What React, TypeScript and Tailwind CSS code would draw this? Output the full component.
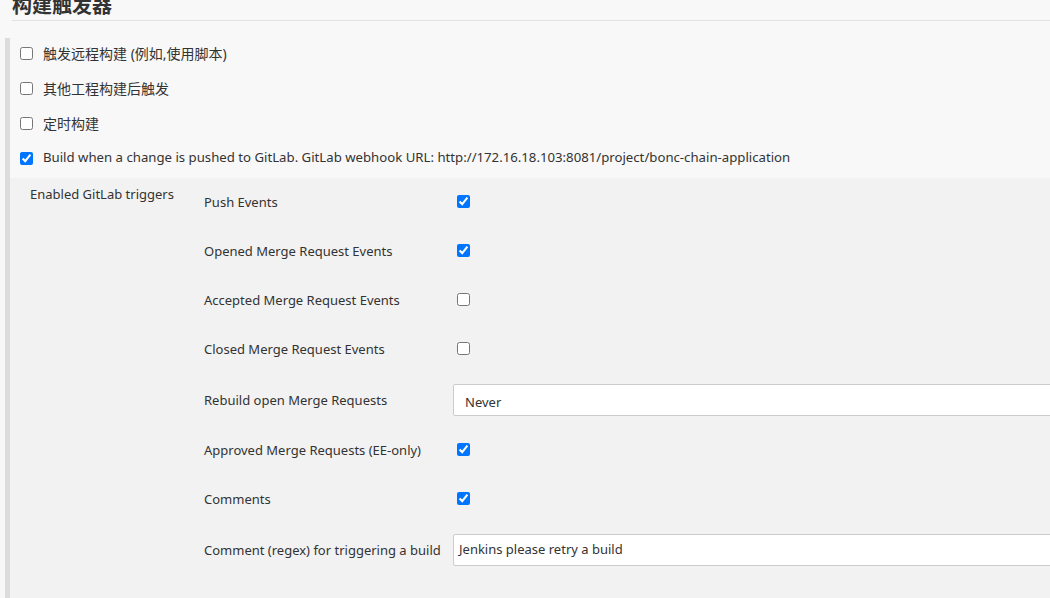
import { ReactNode } from "react";

const topOptions = [
  { label: "触发远程构建 (例如,使用脚本)", checked: false, cjk: true },
  { label: "其他工程构建后触发", checked: false, cjk: true },
  { label: "定时构建", checked: false, cjk: true },
  {
    label:
      "Build when a change is pushed to GitLab. GitLab webhook URL: http://172.16.18.103:8081/project/bonc-chain-application",
    checked: true,
    cjk: false,
  },
];

const Row = ({
  label,
  className,
  children,
}: {
  label: string;
  className: string;
  children: ReactNode;
}) => (
  <div className={`flex items-center ${className}`}>
    <div className="w-[249px] shrink-0 pt-[2px]">{label}</div>
    <div className="flex items-center flex-1">{children}</div>
  </div>
);

const Check = ({ checked }: { checked: boolean }) => (
  <input
    type="checkbox"
    defaultChecked={checked}
    className="ml-[4px] w-[13px] h-[13px] accent-[#0075ff]"
  />
);

const App = () => {
  return (
    <div
      className="w-[1050px] h-[598px] overflow-hidden bg-[#f8f8f8] text-[#333] text-[13px]"
      style={{ fontFamily: '"Noto Sans", "Noto Sans CJK SC", sans-serif' }}
    >
      <h2 className="ml-3 -mt-[8px] leading-[28px] text-[20px] font-bold border-b border-[#e2e2e2] text-[#333]">
        构建触发器
      </h2>

      <div className="ml-[5px] mt-[17px] border-l-[5px] border-[#dcdcdc] h-[600px]">
        <div className="flex flex-col gap-[21px] pt-[8px] pb-[13px] pl-[10px]">
          {topOptions.map((option) => (
            <label key={option.label} className="flex items-center h-[14px] gap-[10px]">
              <input
                type="checkbox"
                defaultChecked={option.checked}
                className="w-[13px] h-[13px] accent-[#0075ff]"
              />
              <span className={`whitespace-nowrap ${option.cjk ? "text-[14px]" : "text-[13.2px]"}`}>
                {option.label}
              </span>
            </label>
          ))}
        </div>

        <div className="flex bg-[#f2f2f2] pl-[20px] pt-[8px] h-[420px]">
          <div className="w-[174px] shrink-0 leading-[16px]">Enabled GitLab triggers</div>
          <div className="flex flex-col">
            <Row label="Push Events" className="h-[31px]">
              <Check checked />
            </Row>
            <Row label="Opened Merge Request Events" className="h-[31px] mt-[18px]">
              <Check checked />
            </Row>
            <Row label="Accepted Merge Request Events" className="h-[31px] mt-[18px]">
              <Check checked={false} />
            </Row>
            <Row label="Closed Merge Request Events" className="h-[31px] mt-[18px]">
              <Check checked={false} />
            </Row>
            <Row label="Rebuild open Merge Requests" className="h-[32px] mt-[20px]">
              <div className="w-[700px] h-[32px] bg-white border border-[#cccccc] rounded-[2px] pl-[11px] pt-[7px] leading-[20px]">
                Never
              </div>
            </Row>
            <Row label="Approved Merge Requests (EE-only)" className="h-[31px] mt-[18px]">
              <Check checked />
            </Row>
            <Row label="Comments" className="h-[31px] mt-[18px]">
              <Check checked />
            </Row>
            <Row label="Comment (regex) for triggering a build" className="h-[32px] mt-[20px]">
              <div className="w-[700px] h-[32px] bg-white border border-[#cccccc] rounded-[2px] pl-[5px] flex items-center">
                Jenkins please retry a build
              </div>
            </Row>
          </div>
        </div>
      </div>
    </div>
  );
};

export default App;
